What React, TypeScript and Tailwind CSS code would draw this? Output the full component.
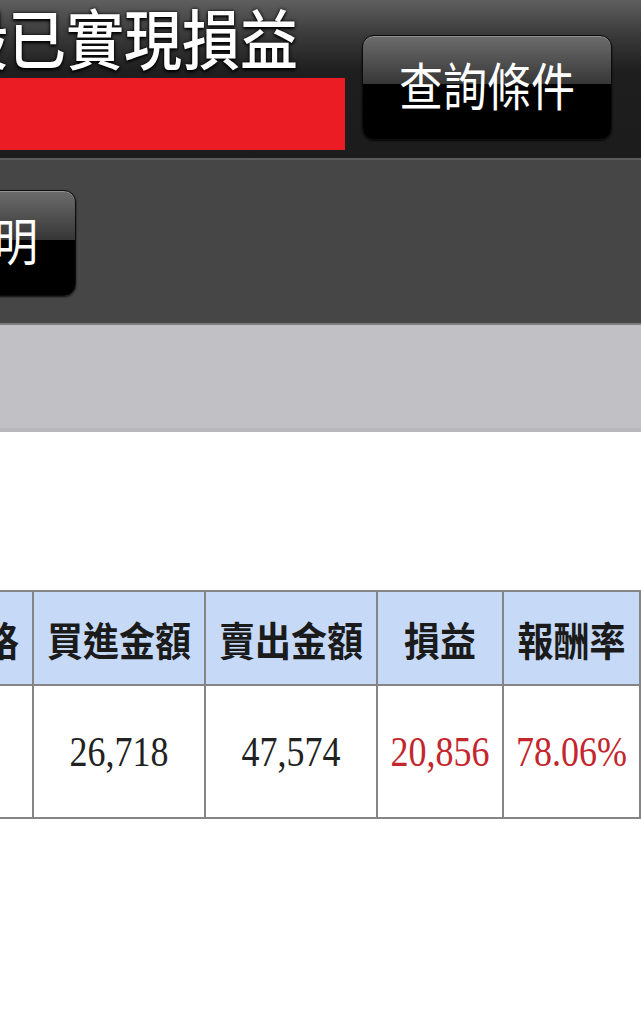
import React from 'react';

// Column geometry of the result table (line to line, px)
const columns = [
    { label: '價格', width: 100 },
    { label: '買進金額', width: 172 },
    { label: '賣出金額', width: 172 },
    { label: '損益', width: 126 },
    { label: '報酬率', width: 137 },
];

const row = [
    { value: '', red: false },
    { value: '26,718', red: false },
    { value: '47,574', red: false },
    { value: '20,856', red: true },
    { value: '78.06%', red: true },
];

const GlossButton: React.FC<{ label: string; className?: string }> = ({ label, className }) => (
    <div
        className={`flex items-center justify-center rounded-[12px] border border-[#0c0c0c] bg-[linear-gradient(to_bottom,#6c6c6c_0%,#4a4a4a_30%,#363636_47%,#000_47%,#000_100%)] shadow-[0_1px_2px_rgba(0,0,0,0.8),inset_0_1px_0_rgba(255,255,255,0.25)] text-white text-[44px] leading-none whitespace-nowrap pb-[8px] ${className ?? ''}`}
    >
        <span className="inline-block scale-y-[1.15]">{label}</span>
    </div>
);

const App: React.FC = () => {
    return (
        <div className="w-[641px] min-h-[1034px] bg-white overflow-hidden font-['Noto_Sans_CJK_TC','Noto_Sans',sans-serif]">
            {/* Title bar */}
            <header className="h-[160px] flex bg-[linear-gradient(to_bottom,#5f5f5f_0%,#3a3a3a_22%,#1e1e1e_45%,#1c1c1c_100%)] border-b-2 border-[#5c5c5c]">
                <div className="w-[345px] flex flex-col overflow-hidden">
                    <h1 className="h-[78px] ml-[-50px] text-[58px] leading-[70px] font-medium text-white whitespace-nowrap [text-shadow:0_0_3px_#000,0_2px_3px_#000]">
                        <span className="inline-block scale-y-[1.12] origin-[50%_40%]">股已實現損益</span>
                    </h1>
                    <div className="h-[72px] bg-[#ec1c24]" />
                </div>
                <GlossButton label="查詢條件" className="ml-[17px] mt-[35px] w-[250px] h-[105px]" />
            </header>

            {/* Toolbar */}
            <div className="h-[163px] bg-[#464646] pt-[30px] overflow-hidden">
                <GlossButton label="說明" className="ml-[-88px] w-[164px] h-[106px]" />
            </div>

            {/* Grey band */}
            <div className="h-[109px] bg-[#c1c0c5] border-t-2 border-[#7c7c7c] border-b-4 border-b-[#b9b8bd]" />

            {/* Result table */}
            <div className="mt-[158px] ml-[-68px]">
                <table className="table-fixed border-collapse">
                    <colgroup>
                        {columns.map((c) => (
                            <col key={c.label} style={{ width: c.width }} />
                        ))}
                    </colgroup>
                    <thead>
                        <tr className="h-[94px] bg-[#c6daf8]">
                            {columns.map((c) => (
                                <th
                                    key={c.label}
                                    className="border-2 border-[#858585] text-[36px] font-bold text-[#1b1b1b] whitespace-nowrap p-0 text-center"
                                >
                                    <span className="inline-block scale-y-[1.1]">{c.label}</span>
                                </th>
                            ))}
                        </tr>
                    </thead>
                    <tbody>
                        <tr className="h-[133px]">
                            {row.map((cell, i) => (
                                <td
                                    key={i}
                                    className={`border-2 border-[#858585] text-center p-0 font-['Liberation_Serif',serif] text-[36px] ${cell.red ? 'text-[#c4262e]' : 'text-[#222]'}`}
                                >
                                    <span className="inline-block scale-y-[1.17]">{cell.value}</span>
                                </td>
                            ))}
                        </tr>
                    </tbody>
                </table>
            </div>
        </div>
    );
};

export default App;
